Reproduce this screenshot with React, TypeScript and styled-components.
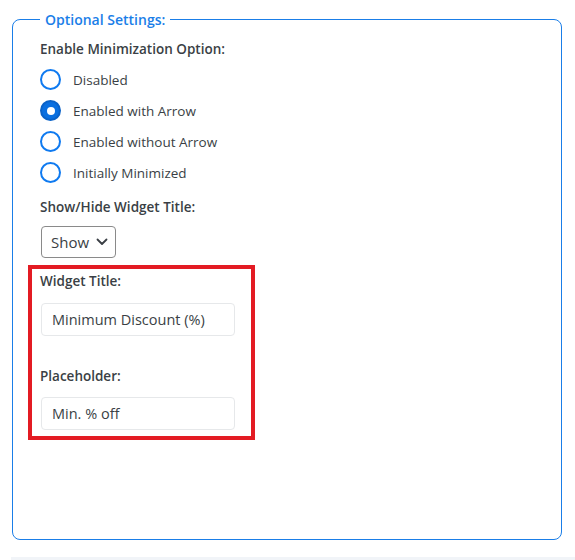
import React from "react";
import styled, { createGlobalStyle } from "styled-components";

const Global = createGlobalStyle`
  html, body { margin: 0; padding: 0; background: #ffffff; }
  body { font-family: "Open Sans", "Noto Sans", sans-serif; color: #3a3f45; }
  * { box-sizing: border-box; }
`;

const Page = styled.div`
  width: 575px;
  height: 560px;
  padding: 10px 13px 0 12px;
  display: flex;
  flex-direction: column;
  overflow: hidden;
`;

const Fieldset = styled.fieldset`
  margin: 0;
  height: 530px;
  flex-shrink: 0;
  border: 1px solid #1a7ee8;
  border-radius: 8px;
  padding: 10px 20px 0 27px;
  display: flex;
  flex-direction: column;
  align-items: flex-start;
`;

const Legend = styled.legend`
  padding: 0 5px;
  font-size: 14px;
  font-weight: 600;
  line-height: 19px;
  color: #1a7ee8;
`;

const Label = styled.div<{ $mt?: number }>`
  font-size: 13.5px;
  font-weight: 600;
  line-height: 20px;
  color: #3a3f45;
  margin-top: ${(p) => p.$mt ?? 0}px;
`;

const RadioList = styled.div`
  display: flex;
  flex-direction: column;
  margin-top: 5px;
`;

const RadioRow = styled.label`
  display: flex;
  align-items: center;
  height: 31px;
  gap: 12px;
  font-size: 13.5px;
  color: #3a3f45;
`;

const Radio = styled.input.attrs({ type: "radio" })`
  appearance: none;
  margin: 0;
  width: 21px;
  height: 21px;
  border: 2px solid #0f7af0;
  border-radius: 50%;
  background: #fff;
  display: grid;
  place-items: center;
  &:checked {
    background: #0a6fe0;
    border-color: #0a62c8;
  }
  &:checked::after {
    content: "";
    width: 8px;
    height: 8px;
    border-radius: 50%;
    background: #fff;
  }
`;

const SelectWrap = styled.div`
  position: relative;
  margin-top: 9px;
  margin-left: 1px;
`;

const Select = styled.select`
  appearance: none;
  height: 32px;
  width: 75px;
  padding: 0 0 0 9px;
  border: 1px solid #8a8a8a;
  border-radius: 4px;
  background: #fff;
  font-family: inherit;
  font-size: 15px;
  color: #3a3f45;
`;

const Chevron = styled.svg`
  position: absolute;
  right: 8px;
  top: 11px;
  pointer-events: none;
`;

const Highlight = styled.div`
  margin-top: 7px;
  margin-left: -12px;
  width: 227px;
  border: 4px solid #e31b23;
  padding: 2px 0 6px 8px;
  display: flex;
  flex-direction: column;
  align-items: flex-start;
`;

const TextInput = styled.input<{ $mt: number }>`
  margin-top: ${(p) => p.$mt}px;
  margin-left: 1px;
  width: 194px;
  height: 33px;
  padding: 0 10px;
  border: 1px solid #e6e8ea;
  border-radius: 4px;
  font-family: inherit;
  font-size: 14.5px;
  color: #3a3f45;
  outline: none;
`;

const Strip = styled.div`
  margin-top: 17px;
  margin-left: -1px;
  margin-right: -13px;
  height: 10px;
  flex-shrink: 0;
  background: #f1f4f8;
`;

const options = [
  "Disabled",
  "Enabled with Arrow",
  "Enabled without Arrow",
  "Initially Minimized",
];

export default function App() {
  return (
    <>
      <Global />
      <Page>
        <Fieldset>
          <Legend>Optional Settings:</Legend>
          <Label>Enable Minimization Option:</Label>
          <RadioList>
            {options.map((o, i) => (
              <RadioRow key={o}>
                <Radio name="min" defaultChecked={i === 1} />
                {o}
              </RadioRow>
            ))}
          </RadioList>
          <Label $mt={9}>Show/Hide Widget Title:</Label>
          <SelectWrap>
            <Select defaultValue="show">
              <option value="show">Show</option>
              <option value="hide">Hide</option>
            </Select>
            <Chevron width="12" height="10" viewBox="0 0 12 10">
              <path d="M1.5 2.5 L6 7 L10.5 2.5" fill="none" stroke="#3a3f45" strokeWidth="1.8" strokeLinecap="round" strokeLinejoin="round" />
            </Chevron>
          </SelectWrap>
          <Highlight>
            <Label>Widget Title:</Label>
            <TextInput $mt={12} defaultValue="Minimum Discount (%)" />
            <Label $mt={30}>Placeholder:</Label>
            <TextInput $mt={11} defaultValue="Min. % off" />
          </Highlight>
        </Fieldset>
        <Strip />
      </Page>
    </>
  );
}
